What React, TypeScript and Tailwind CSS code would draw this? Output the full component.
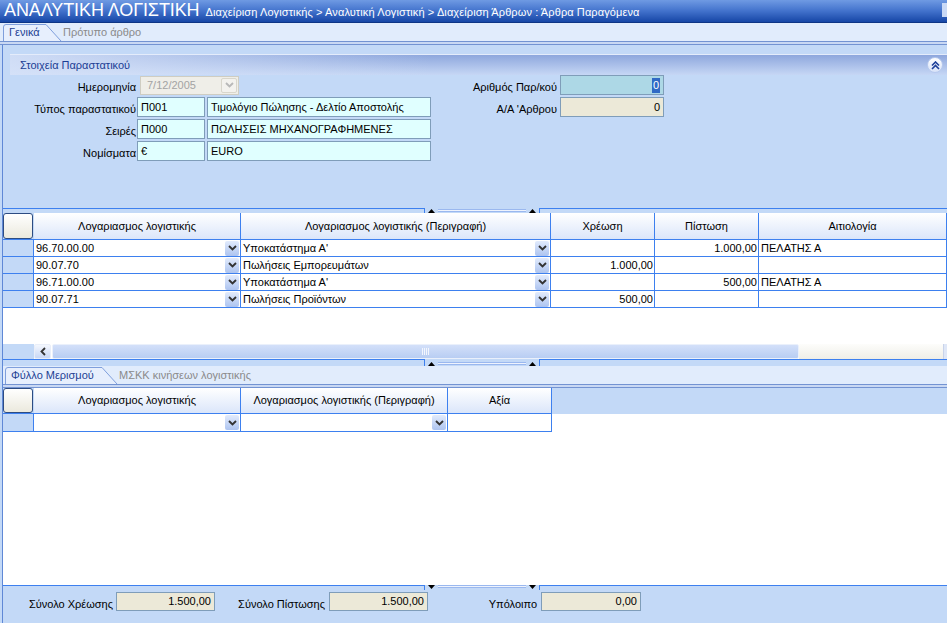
import React from 'react';

const line = 'border-[#3d80ef]';

function Chev({ color = '#333' }: { color?: string }) {
  return (
    <svg width="9" height="6" viewBox="0 0 9 6">
      <path d="M1 1l3.5 3.5L8 1" fill="none" stroke={color} strokeWidth="1.9" />
    </svg>
  );
}

function Dd() {
  return (
    <span className="ml-auto mr-[1px] flex h-[15px] w-[14px] shrink-0 items-center justify-center rounded-[2px] bg-gradient-to-b from-[#e2ebfc] to-[#adc4f0]">
      <Chev />
    </span>
  );
}

function Tri({ down = false }: { down?: boolean }) {
  return (
    <svg width="7" height="4" viewBox="0 0 7 4" className="shrink-0">
      <path d={down ? 'M0 0h7L3.5 4z' : 'M0 4h7L3.5 0z'} fill="#000" />
    </svg>
  );
}

function Splitter({ down = false, h = 'h-[5px]' }: { down?: boolean; h?: string }) {
  return (
    <div className={`${h} flex shrink-0`}>
      <div className={`w-[421px] border-t ${line}`} />
      <div className={`flex w-[116px] ${down ? 'items-start' : 'items-end'} px-[3px] border-x ${line}`}>
        <Tri down={down} />
        <div className="mx-[3px] mb-[1px] h-[3px] flex-1 border-y border-[#9ab8ef] bg-[#eef3fd]" />
        <Tri down={down} />
      </div>
      <div className={`flex-1 border-t ${line}`} />
    </div>
  );
}

function Tab({ label, w }: { label: string; w: number }) {
  return (
    <div className="relative flex h-full items-center pl-[6px]" style={{ width: w }}>
      <svg className="absolute inset-0" width={w} height="18" viewBox={`0 0 ${w} 18`}>
        <path
          d={`M0.5 18V4Q0.5 1.5 3 1.5H${w - 16}L${w - 1} 18`}
          fill="#e7effd"
          stroke="#7f9fdc"
        />
      </svg>
      <span className="relative text-[#1d3f94]">{label}</span>
    </div>
  );
}

function HeadCell({ w, children }: { w?: number; children?: React.ReactNode }) {
  return (
    <div
      className={`flex h-full items-center justify-center border-r border-b ${line} bg-gradient-to-b from-white to-[#dbe6fa] ${w ? 'shrink-0' : 'flex-1'}`}
      style={w ? { width: w } : undefined}
    >
      {children}
    </div>
  );
}

function Cell({ w, children, right, dd }: { w?: number; children?: React.ReactNode; right?: boolean; dd?: boolean }) {
  return (
    <div
      className={`flex h-full items-center border-r border-b ${line} bg-white ${right ? 'justify-end pr-[1px]' : 'pl-[2px]'} ${w ? 'shrink-0' : 'flex-1'}`}
      style={w ? { width: w } : undefined}
    >
      {children}
      {dd && <Dd />}
    </div>
  );
}

function RowHead() {
  return <div className={`h-full w-[31px] shrink-0 border-r border-b ${line} bg-[#c3d9f7]`} />;
}

function CornerBtn() {
  return (
    <div className={`flex h-full w-[31px] shrink-0 border-b ${line} pr-[1px]`}>
      <div className="h-full w-[30px] rounded-[3px] border border-[#2d4c82] bg-gradient-to-b from-white to-[#ebe9dd]" />
    </div>
  );
}

const rows = [
  ['96.70.00.00', "Υποκατάστημα Α'", '', '1.000,00', 'ΠΕΛΑΤΗΣ Α'],
  ['90.07.70', 'Πωλήσεις Εμπορευμάτων', '1.000,00', '', ''],
  ['96.71.00.00', "Υποκατάστημα Α'", '', '500,00', 'ΠΕΛΑΤΗΣ Α'],
  ['90.07.71', 'Πωλήσεις Προϊόντων', '500,00', '', ''],
];

function Field({ w, children, bg = 'bg-[#e0ffff]', right }: { w: number; children?: React.ReactNode; bg?: string; right?: boolean }) {
  return (
    <div
      className={`flex h-[20px] shrink-0 items-center border border-[#7f9db9] ${bg} ${right ? 'justify-end pr-[3px]' : 'pl-[3px]'}`}
      style={{ width: w }}
    >
      {children}
    </div>
  );
}

function FormRow({ label, children }: { label: string; children: React.ReactNode }) {
  return (
    <div className="flex h-[20px] items-center">
      <div className="flex h-full w-[133px] shrink-0 items-center justify-end pt-[5px]">{label}</div>
      {children}
    </div>
  );
}

export default function App() {
  return (
    <div className="flex h-[623px] w-[947px] flex-col overflow-hidden bg-[#c3d9f7] font-['Liberation_Sans',Arial,sans-serif] text-[11px] leading-none text-black">
      {/* title bar */}
      <div className="flex h-[23px] shrink-0 items-end gap-[6px] border-b border-[#0d3585] bg-gradient-to-b from-[#6f9ae3] via-[#4272cc] to-[#1646a6] pb-[3px] pl-[4px] text-white">
        <span className="text-[18px] tracking-[-0.1px]">ΑΝΑΛΥΤΙΚΗ ΛΟΓΙΣΤΙΚΗ</span>
        <span className="pb-[1px] tracking-[0.1px]">
          Διαχείριση Λογιστικής &gt; Αναλυτική Λογιστική &gt; Διαχείριση Άρθρων : Άρθρα Παραγόμενα
        </span>
        <span className="ml-auto mb-[2px] h-[14px] w-[5px] bg-[#c9d9f6]" />
      </div>

      {/* top tabs */}
      <div className="flex h-[18px] shrink-0 items-end bg-[#e1ecfc] pl-[3px]">
        <Tab label="Γενικά" w={59} />
        <span className="flex h-full items-center pl-[1px] text-[#8a8a8a]">Πρότυπο άρθρο</span>
      </div>
      <div className="h-[4px] shrink-0 border-y border-[#7393d2] bg-[#c9d8f3]" />

      {/* body */}
      <div className="flex flex-1 flex-col pl-[2px]">
        <div className="flex flex-1 flex-col border-l border-[#5f88d6]">
          <div className="h-[9px] shrink-0" />
          {/* group header */}
          <div className="ml-[7px] flex h-[21px] shrink-0 items-center justify-between border-t border-[#e4ecfb] bg-[linear-gradient(to_right,rgba(214,226,248,0.9),rgba(214,226,248,0)_45%),linear-gradient(to_bottom,#8ea7dd,#c6d7f5)] pl-[10px] pr-[4px]">
            <span className="text-[#1b3d94]">Στοιχεία Παραστατικού</span>
            <span className="flex h-[16px] w-[16px] items-center justify-center rounded-full border border-[#b7c9ee] bg-gradient-to-b from-white to-[#d7e2f8]">
              <svg width="9" height="9" viewBox="0 0 9 9">
                <path d="M1 4.5l3.5-3.5L8 4.5M1 8l3.5-3.5L8 8" fill="none" stroke="#1d3f9a" strokeWidth="1.6" />
              </svg>
            </span>
          </div>

          {/* form */}
          <div className="flex h-[133px] shrink-0">
            <div className="flex w-[434px] shrink-0 flex-col gap-[2px]">
              <FormRow label="Ημερομηνία">
                <div className="ml-[4px] flex h-[19px] w-[99px] items-center border border-[#cfcdc2] bg-[#efeee8] pl-[6px] text-[#a3a3a3]">
                  7/12/2005
                  <span className="ml-auto mr-[1px] flex h-[15px] w-[16px] items-center justify-center rounded-[2px] border border-[#d8d6cc] bg-[#f3f2ee]">
                    <Chev color="#b8b8b8" />
                  </span>
                </div>
              </FormRow>
              <FormRow label="Τύπος παραστατικού">
                <div className="ml-[1px] flex gap-[2px]">
                  <Field w={68}>Π001</Field>
                  <Field w={224}>Τιμολόγιο Πώλησης - Δελτίο Αποστολής</Field>
                </div>
              </FormRow>
              <FormRow label="Σειρές">
                <div className="ml-[1px] flex gap-[2px]">
                  <Field w={68}>Π000</Field>
                  <Field w={224}>ΠΩΛΗΣΕΙΣ ΜΗΧΑΝΟΓΡΑΦΗΜΕΝΕΣ</Field>
                </div>
              </FormRow>
              <FormRow label="Νομίσματα">
                <div className="ml-[1px] flex gap-[2px]">
                  <Field w={68}>€</Field>
                  <Field w={224}>EURO</Field>
                </div>
              </FormRow>
            </div>
            <div className="flex flex-col gap-[2px]">
              <div className="flex h-[20px] items-center">
                <div className="flex h-full w-[120px] items-center justify-end pt-[5px]">Αριθμός Παρ/κού</div>
                <div className="ml-[3px]">
                  <Field w={104} bg="bg-[#add8e6]" right>
                    <span className="bg-[#316ac5] px-[1px] py-[2px] text-white">0</span>
                  </Field>
                </div>
              </div>
              <div className="flex h-[20px] items-center">
                <div className="flex h-full w-[120px] items-center justify-end pt-[5px]">Α/Α 'Αρθρου</div>
                <div className="ml-[3px]">
                  <Field w={104} bg="bg-[#ece9d8]" right>
                    0
                  </Field>
                </div>
              </div>
            </div>
          </div>

          <Splitter />

          {/* grid 1 */}
          <div className="flex h-[131px] shrink-0 flex-col bg-white">
            <div className="flex h-[27px] shrink-0 bg-[#c3d9f7]">
              <CornerBtn />
              <HeadCell w={207}>Λογαριασμος λογιστικής</HeadCell>
              <HeadCell w={310}>Λογαριασμος λογιστικής (Περιγραφή)</HeadCell>
              <HeadCell w={104}>Χρέωση</HeadCell>
              <HeadCell w={104}>Πίστωση</HeadCell>
              <HeadCell>Αιτιολογία</HeadCell>
            </div>
            {rows.map((r, i) => (
              <div key={i} className="flex h-[17px] shrink-0">
                <RowHead />
                <Cell w={207} dd>
                  {r[0]}
                </Cell>
                <Cell w={310} dd>
                  {r[1]}
                </Cell>
                <Cell w={104} right>
                  {r[2]}
                </Cell>
                <Cell w={104} right>
                  {r[3]}
                </Cell>
                <Cell>{r[4]}</Cell>
              </div>
            ))}
          </div>

          {/* horizontal scrollbar */}
          <div className="flex h-[15px] shrink-0 bg-white">
            <div className="w-[31px] shrink-0 bg-[#c3d9f7]" />
            <div className="flex w-[17px] shrink-0 items-center justify-center rounded-[2px] border border-[#e9eef9] bg-gradient-to-b from-[#f4f7fd] to-[#c9d8f5]">
              <svg width="6" height="9" viewBox="0 0 6 9">
                <path d="M5 1L1.5 4.5 5 8" fill="none" stroke="#333" strokeWidth="1.8" />
              </svg>
            </div>
            <div className="ml-[1px] flex w-[747px] shrink-0 items-center justify-center rounded-[2px] border border-[#eaf0fb] bg-gradient-to-b from-[#d3e0f9] to-[#b8cdf3]">
              <svg width="8" height="7" viewBox="0 0 8 7">
                <path d="M0.5 0v7M2.5 0v7M4.5 0v7M6.5 0v7" stroke="#f3f6fd" strokeWidth="1" />
              </svg>
            </div>
            <div className="flex-1 bg-gradient-to-b from-[#fdfdfb] to-[#efeee7]" />
            <div className="w-[4px] shrink-0 border-l border-[#c8d3ea] bg-[#dfe7f7]" />
          </div>

          <Splitter h="h-[7px]" />

          {/* lower tabs */}
          <div className="flex h-[18px] shrink-0 items-end bg-[#e1ecfc] pl-[2px]">
            <Tab label="Φύλλο Μερισμού" w={113} />
            <span className="flex h-full items-center pl-[1px] text-[#8a8a8a]">ΜΣΚΚ κινήσεων λογιστικής</span>
          </div>
          <div className="h-[4px] shrink-0 border-y border-[#7393d2] bg-[#c9d8f3]" />

          {/* grid 2 */}
          <div className="flex h-[197px] shrink-0 flex-col bg-white">
            <div className="flex h-[26px] shrink-0 bg-[#c3d9f7]">
              <CornerBtn />
              <HeadCell w={207}>Λογαριασμος λογιστικής</HeadCell>
              <HeadCell w={207}>Λογαριασμος λογιστικής (Περιγραφή)</HeadCell>
              <HeadCell w={104}>Αξία</HeadCell>
            </div>
            <div className="flex h-[18px] shrink-0">
              <RowHead />
              <Cell w={207} dd />
              <Cell w={207} dd />
              <Cell w={104} />
            </div>
          </div>

          <Splitter down />

          {/* totals */}
          <div className="flex flex-1 items-start pt-[2px]">
            <div className="flex h-[19px] w-[110px] shrink-0 items-center justify-end pt-[5px]">Σύνολο Χρέωσης</div>
            <div className="ml-[3px] flex h-[19px] w-[99px] shrink-0 items-center justify-end border border-[#7f9db9] bg-[#ece9d8] pr-[3px]">
              1.500,00
            </div>
            <div className="flex h-[19px] w-[110px] shrink-0 items-center justify-end pt-[5px]">Σύνολο Πίστωσης</div>
            <div className="ml-[4px] flex h-[19px] w-[99px] shrink-0 items-center justify-end border border-[#7f9db9] bg-[#ece9d8] pr-[3px]">
              1.500,00
            </div>
            <div className="flex h-[19px] w-[109px] shrink-0 items-center justify-end pt-[5px]">Υπόλοιπο</div>
            <div className="ml-[4px] flex h-[19px] w-[100px] shrink-0 items-center justify-end border border-[#7f9db9] bg-[#ece9d8] pr-[3px]">
              0,00
            </div>
          </div>
        </div>
      </div>
    </div>
  );
}
